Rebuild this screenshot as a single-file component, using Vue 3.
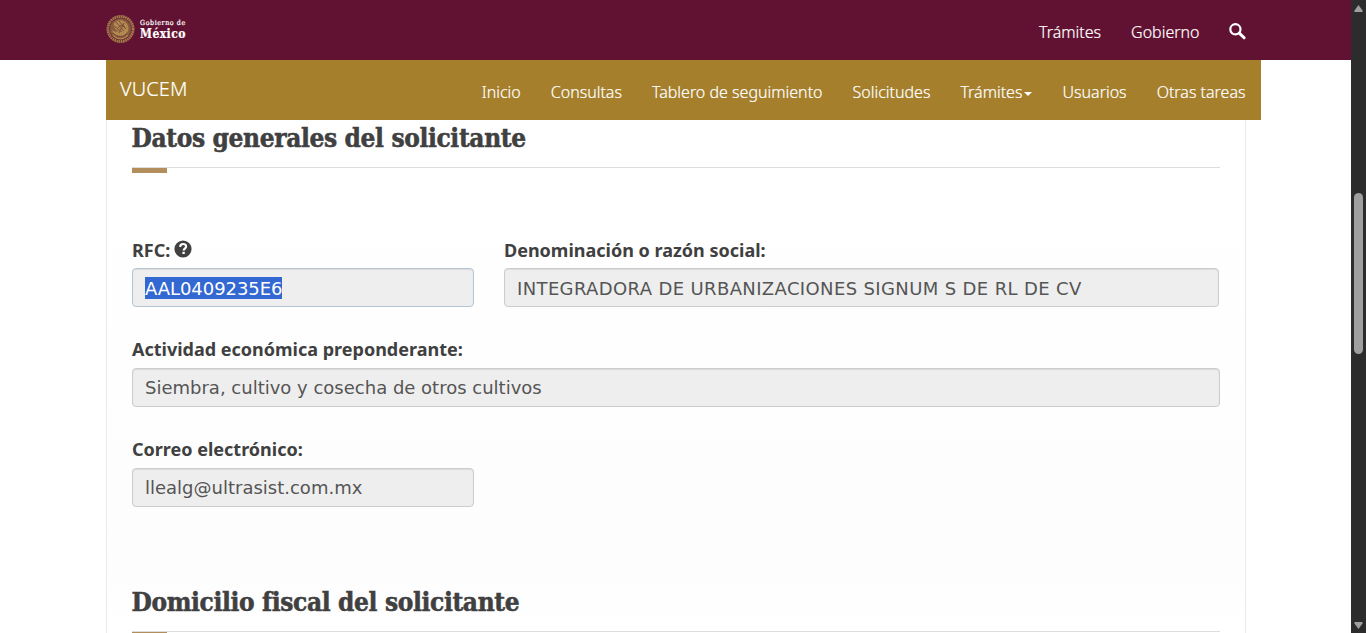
<script setup>
const topLinks = ['Trámites', 'Gobierno']
const menu = [
  { label: 'Inicio' },
  { label: 'Consultas' },
  { label: 'Tablero de seguimiento' },
  { label: 'Solicitudes' },
  { label: 'Trámites', caret: true },
  { label: 'Usuarios' },
  { label: 'Otras tareas' },
]
</script>

<template>
  <div class="viewport">
    <div class="page">
      <header class="topbar">
        <a class="brand">
          <svg class="seal" width="29" height="30" viewBox="0 0 29 30" fill="none">
            <circle cx="14.5" cy="15" r="12.6" stroke="#a37c4a" stroke-width="2.8" stroke-dasharray="1.7 .5" />
            <circle cx="14.5" cy="15" r="10.6" fill="#8a5c3e" stroke="#7d4c3b" stroke-width=".8" />
            <path d="M8 9c3-3 8-4 11-1 3 2 4 6 3 9-2 4-5 6-9 5-4 0-6-3-7-6 3 2 5 2 7 1-4-1-6-4-5-8z" fill="#b08a50" />
            <path d="M10 8l8 9M13 7l7 8M8 12l8 6M18 9l-5 10M7 19c4 4 10 5 14 0M12 14l3-3 4 2" stroke="#6f3430" stroke-width=".7" />
            <path d="M7 21c4 5 11 5 15 0" stroke="#b08a50" stroke-width="1.2" />
          </svg>
          <span class="wordmark"><small>Gobierno de</small><b>México</b></span>
        </a>
        <nav class="toplinks">
          <a v-for="l in topLinks" :key="l">{{ l }}</a>
          <svg class="search" width="17" height="17" viewBox="0 0 17 17" fill="none" stroke="#fff">
            <circle cx="6.4" cy="6.3" r="5.1" stroke-width="2.2" />
            <path d="M10.3 10.1l4.8 4.7" stroke-width="3" stroke-linecap="round" />
          </svg>
        </nav>
      </header>

      <div class="subbar">
        <a class="vucem">VUCEM</a>
        <nav class="menu">
          <a v-for="m in menu" :key="m.label">{{ m.label }}<i v-if="m.caret" class="caret"></i></a>
        </nav>
      </div>

      <main class="sheet">
        <h3 class="first">Datos generales del solicitante</h3>
        <div class="rule"></div>
        <form class="fields">
          <div class="field">
            <label>RFC:
              <svg class="help" width="18" height="18" viewBox="0 0 18 18">
                <circle cx="9" cy="9" r="8.6" fill="#404041" />
                <path d="M6.1 6.9C6.2 4.9 7.4 4 9.1 4c1.8 0 3 1 3 2.5 0 2-2.4 2.1-2.4 4" fill="none" stroke="#fff" stroke-width="2.2" />
                <path d="M8.4 11.8h2.4v2.2H8.4z" fill="#fff" />
              </svg>
            </label>
            <div class="input focused"><span class="selected">AAL0409235E6</span></div>
          </div>
          <div class="field">
            <label>Denominación o razón social:</label>
            <div class="input upper">INTEGRADORA DE URBANIZACIONES SIGNUM S DE RL DE CV</div>
          </div>
          <div class="field wide">
            <label>Actividad económica preponderante:</label>
            <div class="input low">Siembra, cultivo y cosecha de otros cultivos</div>
          </div>
          <div class="field">
            <label>Correo electrónico:</label>
            <div class="input low">llealg@ultrasist.com.mx</div>
          </div>
        </form>
        <h3 class="second">Domicilio fiscal del solicitante</h3>
        <div class="rule"></div>
      </main>
    </div>

    <aside class="scrollbar">
      <svg width="15" height="13" viewBox="0 0 15 13"><path d="M7.5 5L11.5 10.5Q12 12 11 12H4Q3 12 3.5 10.5z" fill="#9f9f9f" /></svg>
      <div class="thumb"></div>
      <svg class="down" width="15" height="13" viewBox="0 0 15 13"><path d="M7.5 9L11.5 3.5Q12 2 11 2H4Q3 2 3.5 3.5z" fill="#9f9f9f" /></svg>
    </aside>
  </div>
</template>

<style>
body { margin: 0; overflow: hidden; }
</style>

<style scoped>
* { box-sizing: border-box; }
.viewport {
  display: flex;
  width: 1366px;
  height: 633px;
  overflow: hidden;
  background: #fff;
  font-family: "Noto Sans", "Open Sans", sans-serif;
}
.page { width: 1351px; height: 633px; overflow: hidden; }
.topbar {
  display: flex;
  justify-content: space-between;
  height: 60px;
  padding: 0 105px 0 106px;
  background: #611232;
  color: #fff;
}
.brand { display: flex; padding-top: 14px; }
.wordmark {
  display: flex;
  flex-direction: column;
  padding: 6px 0 0 5px;
  font-family: "DejaVu Serif Condensed", "DejaVu Serif", serif;
}
.wordmark small { font-size: 7px; line-height: 7px; letter-spacing: .6px; -webkit-text-stroke: .2px #fff; }
.wordmark b { font-size: 12px; line-height: 14px; letter-spacing: .45px; -webkit-text-stroke: .2px #fff; }
.toplinks { display: flex; gap: 30px; font-weight: 300; font-size: 16px; line-height: 24px; padding-top: 20px; -webkit-text-stroke: .2px #fff; }
.search { margin-top: 3px; margin-left: -.5px; }
.subbar {
  display: flex;
  justify-content: space-between;
  width: 1155px;
  height: 60px;
  margin-left: 106px;
  padding: 0 15.5px 0 14px;
  background: #a57f2c;
  color: #fff;
  font-weight: 300;
  -webkit-text-stroke: .2px #fff;
}
.vucem { font-size: 20px; line-height: 28px; padding-top: 15px; letter-spacing: .1px; }
.menu { display: flex; gap: 30px; font-size: 16px; line-height: 24px; padding-top: 20px; }
.caret {
  display: inline-block;
  margin-left: 2px;
  vertical-align: middle;
  border: 4px solid transparent;
  border-top-color: #fff;
  border-bottom: 0;
}
.sheet {
  width: 1140px;
  height: 513px;
  margin-left: 106px;
  padding: 0 25px;
  border: solid #eaeaea;
  border-width: 0 1px;
  background: linear-gradient(#fff, #fdfdfd 450px, #fff);
}
h3 {
  margin: 0;
  color: #404041;
  font: bold 26px/36px "DejaVu Serif Condensed", "DejaVu Serif", serif;
  letter-spacing: -.36px;
  text-indent: -.5px;
  -webkit-text-stroke: .5px #404041;
  white-space: nowrap;
}
.rule { height: 6px; border-top: 1px solid #ddd; }
.rule::before { content: ""; display: block; width: 35px; height: 5px; background: #b38e5d; }
.first { height: 47px; }
.fields {
  display: grid;
  grid-template-columns: 342px 715px;
  column-gap: 30px;
  row-gap: 31px;
  padding-top: 65px;
  width: 1088px;
}
.field { height: 69px; }
.wide { width: 1088px; grid-column: 1 / 3; }
.field label {
  display: flex;
  gap: 4px;
  height: 30px;
  line-height: 24px;
  font-size: 18px;
  font-weight: 700;
  color: #404041;
  white-space: nowrap;
}
.wide label, .wide ~ .field label { line-height: 22px; }
.help { margin-top: 2px; }
.input {
  height: 39px;
  padding: 0 12px;
  border: 1px solid #ccc;
  border-radius: 4px;
  background: #eee;
  box-shadow: inset 0 1px 1px rgba(0, 0, 0, .08);
  color: #555;
  font: 18px/39px "DejaVu Sans", sans-serif;
  white-space: nowrap;
}
.upper { letter-spacing: .37px; }
.low { line-height: 37px; }
.focused { border-color: #b4c6d6; display: flex; align-items: center; }
.selected { height: 22px; line-height: 24px; letter-spacing: -.06px; background: #3367d1; color: #fff; }
.second { height: 47px; margin-top: 77px; }
.scrollbar {
  display: flex;
  flex-direction: column;
  align-items: center;
  width: 15px;
  height: 633px;
  background: #2c2c2c;
}
.thumb { width: 9px; height: 161px; margin-top: 180px; border-radius: 5px; background: #9f9f9f; }
.down { margin-top: auto; }
</style>
